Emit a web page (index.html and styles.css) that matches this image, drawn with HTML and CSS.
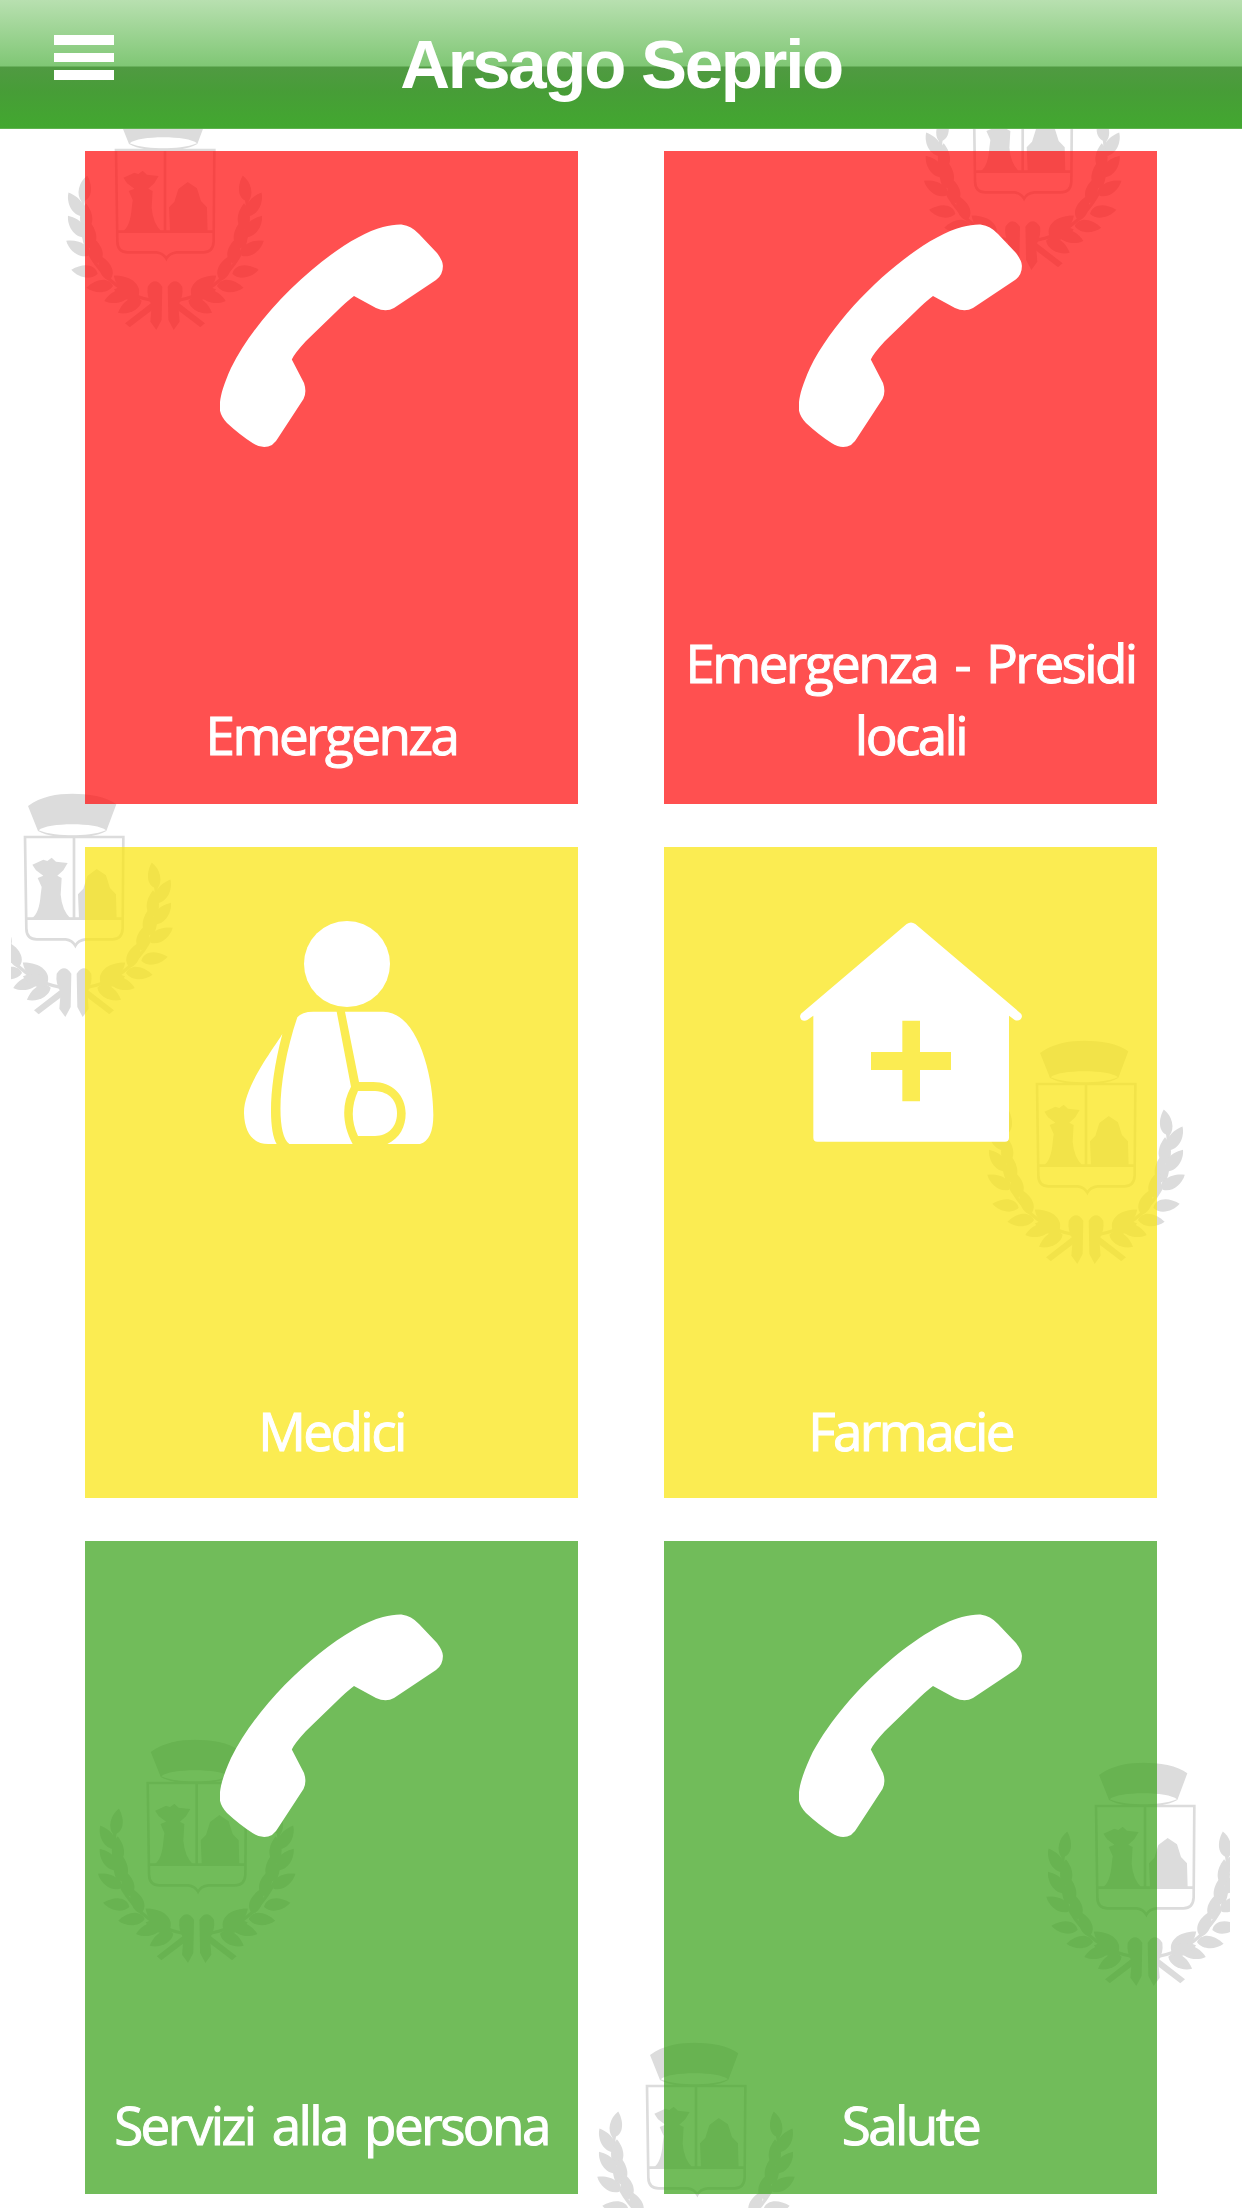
FILE: index.html
```html
<!DOCTYPE html>
<html lang="it">
<head>
    <meta charset="UTF-8">
    <meta name="viewport" content="width=device-width, initial-scale=1.0">
    <title>Arsago Seprio</title>
    <link rel="stylesheet" href="styles.css">
</head>
<body>
    <header class="navbar">
        <button class="menu-btn" aria-label="Menu">
            <span></span>
            <span></span>
            <span></span>
        </button>
        <h1>Arsago Seprio</h1>
    </header>

    <main class="content">
        <!-- coat of arms watermark -->
        <svg class="watermark" viewBox="11 129 1219 2079" aria-hidden="true">
            <defs>
                <path id="leaf" d="M0 0C10 -28 48 -28 80 0C56 21 16 22 0 0Z"/>
                <g id="branch">
                    <path d="M365 645Q465 635 530 565T596 430Q602 370 592 320" fill="none" stroke="#dcdcdc" stroke-width="10"/>
                    <use href="#leaf" transform="translate(600 345) rotate(-102)"/>
                    <use href="#leaf" transform="translate(602 388) rotate(-62)"/>
                    <use href="#leaf" transform="translate(590 430) rotate(-92)"/>
                    <use href="#leaf" transform="translate(594 452) rotate(-54)"/>
                    <use href="#leaf" transform="translate(578 485) rotate(-92)"/>
                    <use href="#leaf" transform="translate(580 507) rotate(-34)"/>
                    <use href="#leaf" transform="translate(552 530) rotate(-79)"/>
                    <use href="#leaf" transform="translate(552 562) rotate(-9)"/>
                    <use href="#leaf" transform="translate(518 582) rotate(-70)"/>
                    <use href="#leaf" transform="translate(506 598) rotate(4)"/>
                    <use href="#leaf" transform="translate(430 628) rotate(-40) scale(1.2)"/>
                    <use href="#leaf" transform="translate(455 622) rotate(15)"/>
                    <use href="#leaf" transform="translate(420 642) rotate(27)"/>
                    <use href="#leaf" transform="translate(428 635) rotate(-20)"/>
                    <path d="M358 600Q380 568 402 600Q406 630 390 655L394 705L376 730L360 700Z"/>
                    <path d="M380 640L470 710L456 722L380 664Z"/>
                </g>
                <g id="stemma" fill="#dcdcdc" transform="scale(.3333) translate(-350 -190)">
                    <path fill-rule="evenodd" d="M212 97C250 68 300 60 345 60S450 68 477 92L447 172C420 187 380 192 345 192S270 187 242 172ZM244 170C270 182 315 185 345 185S420 182 446 170C420 146 270 146 244 170Z"/>
                    <path d="M203 190H498L496 465Q494 497 465 497H385Q362 500 354 516Q345 500 325 497H238Q208 497 207 465ZM350 190V435M207 435H496" fill="none" stroke="#dcdcdc" stroke-width="8"/>
                    <path d="M225 273L258 258L270 262L283 252L296 264L331 268L318 290L300 306L313 313L310 363Q314 410 340 435H222Q246 420 250 363L253 340L241 313L258 306L236 290Z"/>
                    <path d="M365 435L362 362L378 345L390 307L418 286L446 305L458 343L476 362L478 435Z"/>
                    <use href="#branch"/>
                    <use href="#branch" transform="translate(700 0) scale(-1 1)"/>
                </g>
            </defs>
            <use href="#stemma" x="165" y="150"/>
            <use href="#stemma" x="1022.7" y="90"/>
            <use href="#stemma" x="74" y="837"/>
            <use href="#stemma" x="1086" y="1084"/>
            <use href="#stemma" x="196.7" y="1783"/>
            <use href="#stemma" x="1145" y="1806"/>
            <use href="#stemma" x="696" y="2086"/>
        </svg>

        <div class="grid">
            <a class="tile red">
                <svg class="icon" viewBox="220 224 224 224">
                    <path id="phone" d="M402.5 224.7C397 224.3 390 225.5 383 227C340 238 262 305 231 368C222 388 220 398 219.6 407Q219.6 415 227 423Q240 435 252.5 443Q263 450 272 445Q276 442 279 436.5L303.500 399Q307 392 304 383L291.8 359.500Q294 354 306 341L336 312Q346 302 354 296L376 308Q386 312.5 394 308L436 280Q443 275 442.9 266Q443 261 437 253L419 234Q411 225.500 402.5 224.7Z"/>
                </svg>
                <span class="label">Emergenza</span>
            </a>
            <a class="tile red">
                <svg class="icon" viewBox="220 224 224 224"><use href="#phone"/></svg>
                <span class="label">Emergenza - Presidi locali</span>
            </a>
            <a class="tile yellow">
                <svg class="icon" viewBox="0 60 672 672">
                    <circle cx="381" cy="192" r="129"/>
                    <path d="M187 402C165 440 70 560 72 640C74 700 100 732 145 732H170C145 690 145 560 187 402Z"/>
                    <path d="M232 352Q245 335 280 335H350L393 560C365 610 365 670 398 732H208C165 700 175 520 232 352Z"/>
                    <path d="M375 335H490C590 335 640 520 640 645Q640 720 600 732H502C540 715 557 680 557 640C557 585 515 546 460 546H417Z"/>
                    <path d="M414 573H465C510 575 531 605 531 640C531 680 505 708 465 708H414C393 665 393 620 414 573Z"/>
                </svg>
                <span class="label">Medici</span>
            </a>
            <a class="tile yellow">
                <svg class="icon" viewBox="57 60 672 672">
                    <path fill-rule="evenodd" d="M380 72Q393 63 406 72L723 341Q729 350 722 358Q713 365 703 359L687 347V713Q687 725 675 725H112Q100 725 100 713V347L83 359Q73 365 64 359Q57 350 63 341ZM367 362V456H273V510H367V604H420V510H513V456H420V362Z"/>
                </svg>
                <span class="label">Farmacie</span>
            </a>
            <a class="tile green">
                <svg class="icon" viewBox="220 224 224 224"><use href="#phone"/></svg>
                <span class="label">Servizi alla persona</span>
            </a>
            <a class="tile green">
                <svg class="icon" viewBox="220 224 224 224"><use href="#phone"/></svg>
                <span class="label">Salute</span>
            </a>
        </div>
    </main>
</body>
</html>
```
FILE: styles.css
```css
* {
    box-sizing: border-box;
}

body {
    margin: 0;
    height: 2208px;
    overflow: hidden;
    background-color: #fff;
    color: #fff;
    font-family: 'Open Sans', 'Noto Sans', sans-serif;
}

.navbar {
    display: grid;
    grid-template-columns: 1fr auto 1fr;
    height: 129px;
    padding: 0 54px;
    background: linear-gradient(#b8e0b0 0, #80c775 66px, #509a42 67px, #479d37 92px, #42a82f 100%);
    border-bottom: 1px solid #5fb350;
}

.navbar h1 {
    grid-column: 2;
    margin: 0;
    padding-top: 25px;
    font-family: 'Liberation Sans', Arial, sans-serif;
    font-size: 69px;
    font-weight: bold;
    line-height: 80px;
    letter-spacing: -2.3px;
}

.menu-btn {
    display: flex;
    flex-direction: column;
    gap: 8px;
    justify-self: start;
    width: 60px;
    height: 80px;
    padding: 35px 0 0;
    border: none;
    background: none;
}

.menu-btn span {
    width: 60px;
    height: 9.5px;
    background-color: #fff;
}

.content {
    position: relative;
    height: 2079px;
}

.watermark {
    position: absolute;
    top: 0;
    left: 11px;
    width: 1219px;
    height: 2079px;
}

.grid {
    position: relative;
    display: grid;
    grid-template-columns: 493px 493px;
    grid-template-rows: 653px 651px 653px;
    gap: 43px 86px;
    padding: 22px 85px 0;
}

.tile {
    display: flex;
    flex-direction: column;
    align-items: center;
    justify-content: space-between;
    padding: 73px 10px 33px;
}

.red {
    background-color: rgba(255, 19, 19, 0.74);
}

.yellow {
    padding-bottom: 31px;
    background-color: rgba(250, 229, 21, 0.74);
}

.green {
    background-color: rgba(63, 164, 33, 0.74);
}

.icon {
    width: 224px;
    height: 224px;
    fill: #fff;
}

.label {
    font-size: 53px;
    line-height: 72px;
    letter-spacing: -2.6px;
    word-spacing: 6px;
    text-align: center;
    -webkit-text-stroke: 1px #fff;
}
```
